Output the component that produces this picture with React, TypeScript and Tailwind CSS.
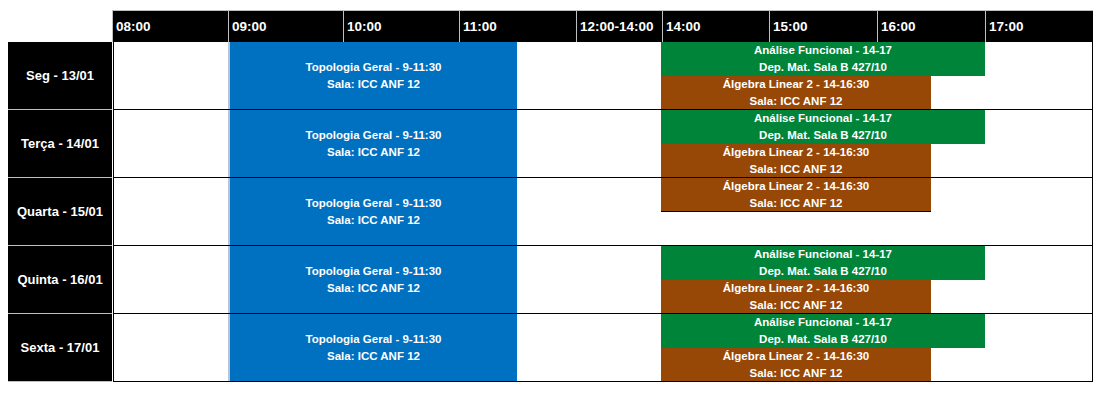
import React from "react";

const headerCells: { label: string; cls: string }[] = [
  { label: "08:00", cls: "w-[115px]" },
  { label: "09:00", cls: "w-[115px] border-l border-[#bfbfbf]" },
  { label: "10:00", cls: "w-[116px] border-l border-[#bfbfbf]" },
  { label: "11:00", cls: "w-[117px] border-l border-[#bfbfbf]" },
  { label: "12:00-14:00", cls: "w-[86px] border-l border-[#bfbfbf]" },
  { label: "14:00", cls: "w-[107px] border-l border-[#bfbfbf]" },
  { label: "15:00", cls: "w-[108px] border-l border-[#bfbfbf]" },
  { label: "16:00", cls: "w-[108px] border-l border-[#bfbfbf]" },
  { label: "17:00", cls: "w-[108px] border-l border-[#bfbfbf]" },
];

type Day = { label: string; kind: "full" | "algebraOnly" };

const days: Day[] = [
  { label: "Seg - 13/01", kind: "full" },
  { label: "Terça - 14/01", kind: "full" },
  { label: "Quarta - 15/01", kind: "algebraOnly" },
  { label: "Quinta - 16/01", kind: "full" },
  { label: "Sexta - 17/01", kind: "full" },
];

function Block({ className, lines }: { className: string; lines: string[] }) {
  return (
    <div
      className={`flex flex-col items-center justify-center text-white font-bold text-[11.5px] leading-[17px] whitespace-nowrap ${className}`}
    >
      {lines.map((l) => (
        <span key={l}>{l}</span>
      ))}
    </div>
  );
}

function DayRow({ day }: { day: Day }) {
  return (
    <div className="flex h-[68px]">
      <div className="w-[104px] h-[68px] bg-black border-b border-[#c0c0c0] flex items-center justify-center text-white font-bold text-[13px] pt-[1px]">
        {day.label}
      </div>
      <div className="w-[1px]" />
      <div className="h-[68px] border-l border-r border-b border-black">
        <div className="grid grid-cols-[114px_115px_116px_58px_59px_85px_108px_108px_54px_54px_107px] grid-rows-[17px_17px_17px_16px] h-[67px]">
          <Block
            className="col-start-2 col-span-3 row-start-1 row-span-4 bg-[#0070c0] border-l-2 border-[#b8c4da]"
            lines={["Topologia Geral - 9-11:30", "Sala: ICC ANF 12"]}
          />
          {day.kind === "full" ? (
            <>
              <Block
                className="col-start-7 col-span-4 row-start-1 row-span-2 bg-[#00843a]"
                lines={["Análise Funcional - 14-17", "Dep. Mat. Sala B 427/10"]}
              />
              <Block
                className="col-start-7 col-span-3 row-start-3 row-span-2 bg-[#974706]"
                lines={["Álgebra Linear 2 - 14-16:30", "Sala: ICC ANF 12"]}
              />
            </>
          ) : (
            <Block
              className="col-start-7 col-span-3 row-start-1 row-span-2 bg-[#974706] border-b border-black"
              lines={["Álgebra Linear 2 - 14-16:30", "Sala: ICC ANF 12"]}
            />
          )}
        </div>
      </div>
    </div>
  );
}

export default function App() {
  return (
    <div className="w-[1104px] h-[396px] bg-white pt-[10px] pl-[8px] font-['Liberation_Sans',Arial,sans-serif]">
      <div className="flex">
        <div className="w-[104px]" />
        <div className="flex h-[32px] bg-black border-l border-t border-[#bfbfbf]">
          {headerCells.map((c) => (
            <div
              key={c.label}
              className={`h-[31px] flex items-center pl-[3px] pt-[1px] text-white font-bold text-[13.5px] ${c.cls}`}
            >
              {c.label}
            </div>
          ))}
        </div>
      </div>
      <div className="flex flex-col">
        {days.map((d) => (
          <DayRow key={d.label} day={d} />
        ))}
      </div>
    </div>
  );
}
